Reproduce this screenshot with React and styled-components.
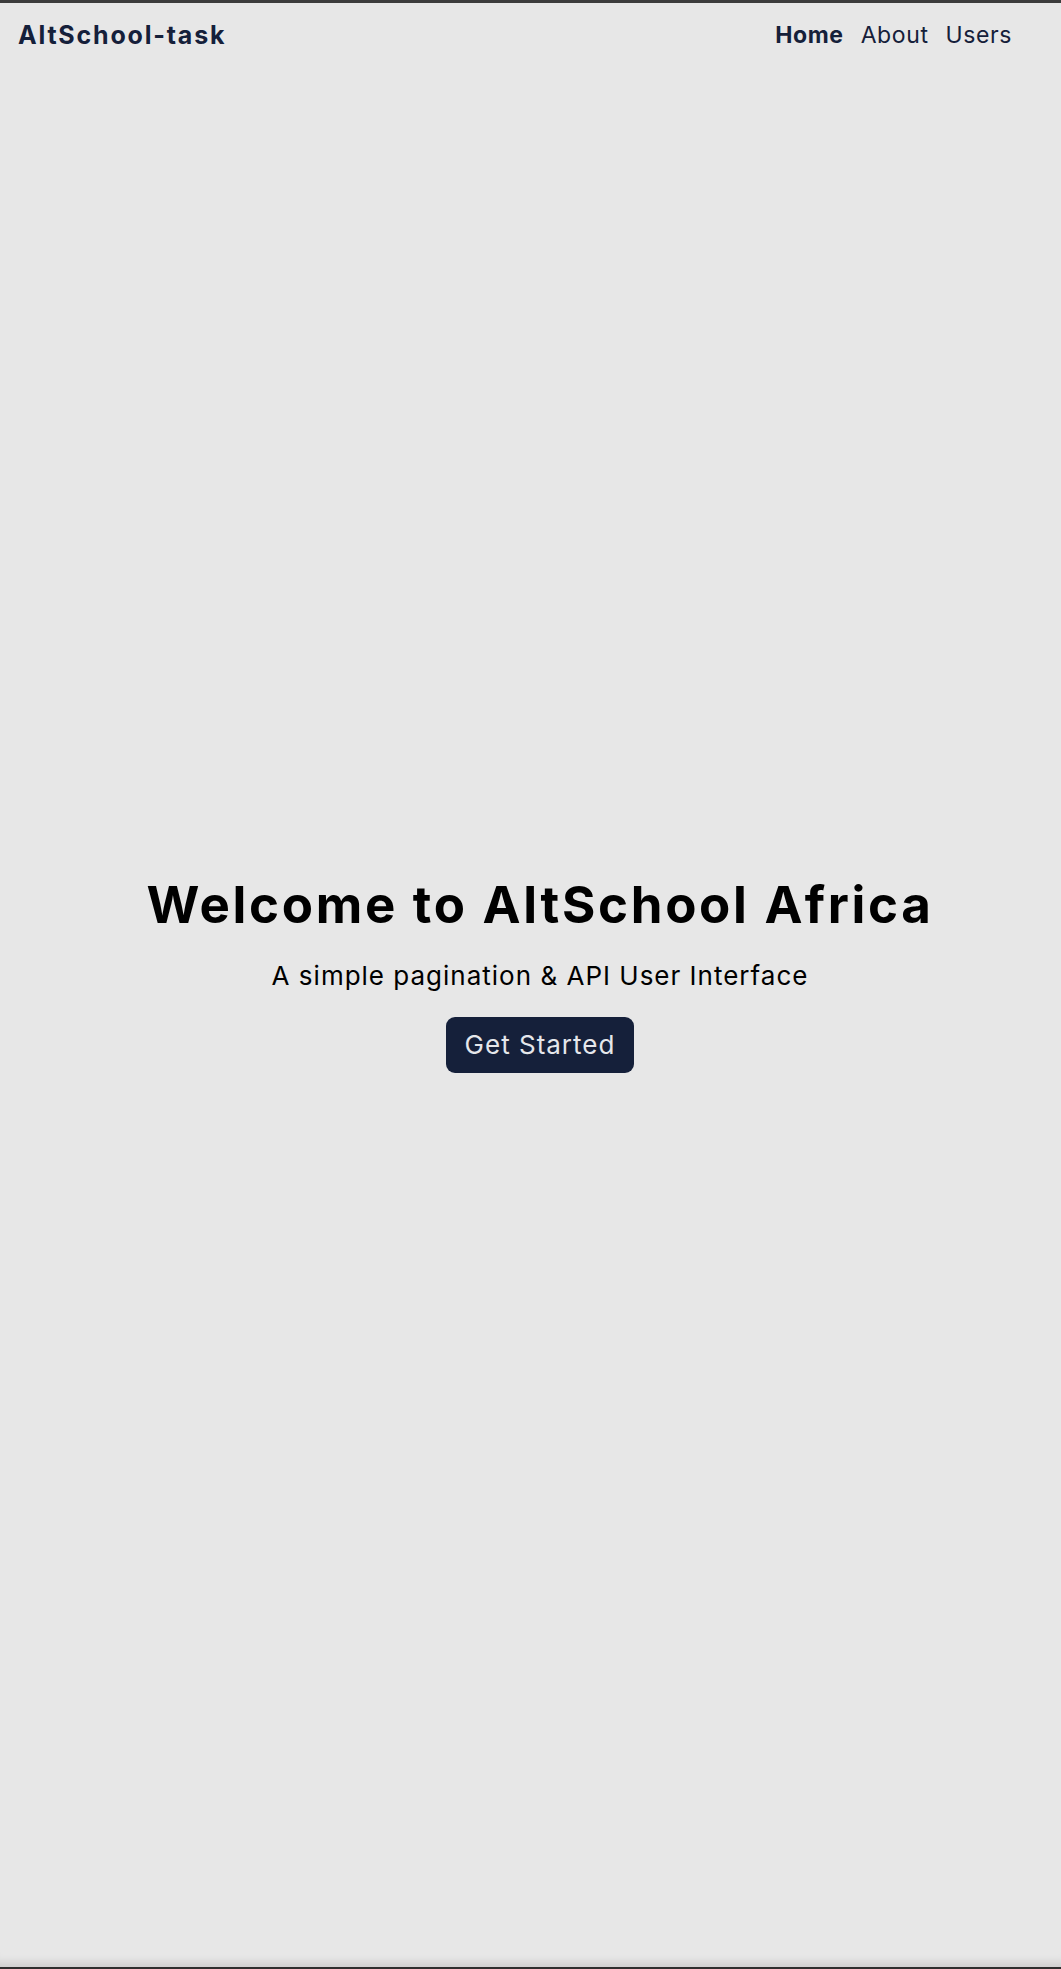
import React from "react";
import styled, { createGlobalStyle } from "styled-components";

const Global = createGlobalStyle`
  html, body { margin: 0; padding: 0; background: #e7e7e7; }
  body { font-family: Inter, "Noto Sans", "Liberation Sans", sans-serif; }
  * { box-sizing: border-box; }
`;

const Page = styled.div`
  min-height: 100vh;
  display: flex;
  flex-direction: column;
  background: #e7e7e7;
  border-top: 3px solid #3c3c3c;
  border-bottom: 2px solid #2f2f2f;
  box-shadow: inset 0 -12px 10px -8px rgba(0, 0, 0, 0.12);
`;

const NavBar = styled.header`
  display: flex;
  align-items: center;
  justify-content: space-between;
  height: 64px;
  padding: 0 49px 0 18px;
`;

const Logo = styled.a`
  font-size: 25px;
  font-weight: 700;
  color: #15203a;
  text-decoration: none;
  letter-spacing: 1.8px;
`;

const NavLinks = styled.nav`
  display: flex;
  gap: 17px;
`;

const NavLink = styled.a`
  font-size: 23px;
  font-weight: ${(p) => (p.$active ? 700 : 400)};
  color: #15203a;
  text-decoration: none;
  letter-spacing: 0.6px;
`;

const Hero = styled.main`
  flex: 1;
  display: flex;
  flex-direction: column;
  align-items: center;
  justify-content: center;
  padding: 0 0 88px 19px;
`;

const Title = styled.h1`
  margin: 0;
  font-size: 51px;
  font-weight: 700;
  color: #000;
  letter-spacing: 2.7px;
`;

const Subtitle = styled.p`
  margin: 25px 0 0;
  font-size: 26px;
  font-weight: 400;
  color: #000;
  letter-spacing: 1px;
`;

const Button = styled.button`
  margin-top: 26px;
  height: 56px;
  padding: 0 19px;
  border: none;
  border-radius: 9px;
  background: #15203a;
  color: #e5e7eb;
  font-family: inherit;
  font-size: 26px;
  letter-spacing: 1px;
  cursor: pointer;
`;

export default function App() {
  return (
    <>
      <Global />
      <Page>
        <NavBar>
          <Logo href="#">AltSchool-task</Logo>
          <NavLinks>
            <NavLink href="#" $active>Home</NavLink>
            <NavLink href="#">About</NavLink>
            <NavLink href="#">Users</NavLink>
          </NavLinks>
        </NavBar>
        <Hero>
          <Title>Welcome to AltSchool Africa</Title>
          <Subtitle>A simple pagination &amp; API User Interface</Subtitle>
          <Button>Get Started</Button>
        </Hero>
      </Page>
    </>
  );
}
